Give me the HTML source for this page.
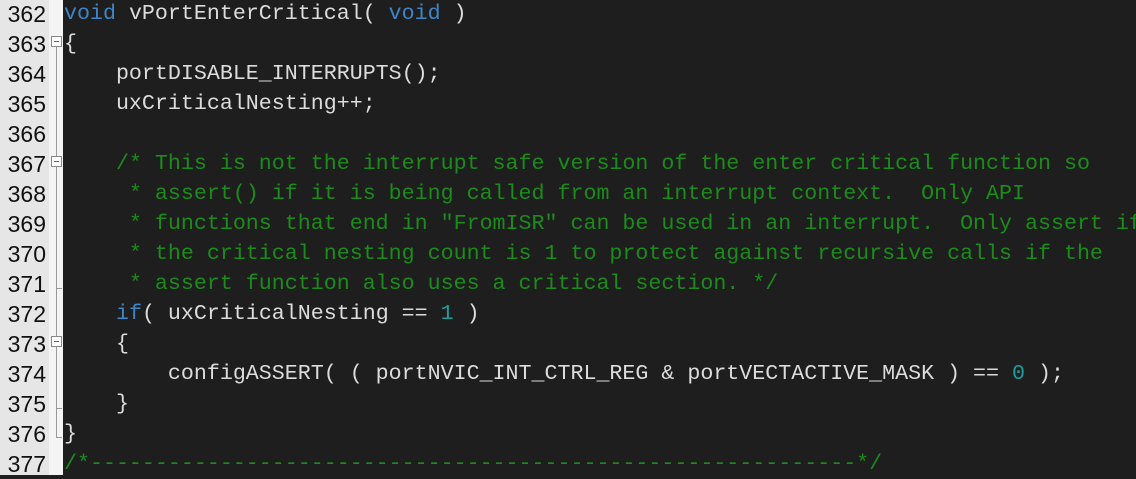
<!DOCTYPE html>
<html><head><style>
body{margin:0;width:1136px;height:475px;overflow:hidden;background:#1e1e1e;position:relative;font-family:"Liberation Mono",monospace;font-size:21.65px}
#g{position:absolute;left:0;top:0;width:49px;height:475px;background:#e6e6e6}
#f{position:absolute;left:49px;top:0;width:14px;height:475px;background:#f4f4f4}
.ln{position:absolute;left:0;width:46px;text-align:right;color:#111;font-family:"Liberation Sans",sans-serif;font-size:23px;line-height:30px}
.c{position:absolute;left:64px;white-space:pre;color:#dcdcdc;line-height:30px}
.k{color:#3d85c6}.m{color:#1b8c1b}.n{color:#1f9c9c}
.box{position:absolute;left:51px;width:11px;height:11px;border:1px solid #888;background:#fff;box-sizing:border-box}
.box:after{content:"";position:absolute;left:2px;top:4px;width:5px;height:1px;background:#666}
.vl{position:absolute;left:56px;width:1px;background:#999}
.tk{position:absolute;left:56px;width:6px;height:1px;background:#999}
</style></head><body>
<div id="g"></div><div id="f"></div>
<div class="ln" style="top:-1px">362<br>363<br>364<br>365<br>366<br>367<br>368<br>369<br>370<br>371<br>372<br>373<br>374<br>375<br>376<br>377</div>
<div class="box" style="top:36px"></div>
<div class="vl" style="top:47px;height:391px"></div>
<div class="box" style="top:156px"></div>
<div class="tk" style="top:288px"></div>
<div class="box" style="top:336px"></div>
<div class="tk" style="top:408px"></div>
<div class="tk" style="top:437px"></div>
<div class="c" style="top:-1px"><span class="k">void</span> vPortEnterCritical( <span class="k">void</span> )
{
    portDISABLE_INTERRUPTS();
    uxCriticalNesting++;

<span class="m">    /* This is not the interrupt safe version of the enter critical function so
     * assert() if it is being called from an interrupt context.  Only API
     * functions that end in "FromISR" can be used in an interrupt.  Only assert if
     * the critical nesting count is 1 to protect against recursive calls if the
     * assert function also uses a critical section. */</span>
    <span class="k">if</span>( uxCriticalNesting == <span class="n">1</span> )
    {
        configASSERT( ( portNVIC_INT_CTRL_REG &amp; portVECTACTIVE_MASK ) == <span class="n">0</span> );
    }
}
<span class="m">/*-----------------------------------------------------------*/</span></div>
</body></html>
